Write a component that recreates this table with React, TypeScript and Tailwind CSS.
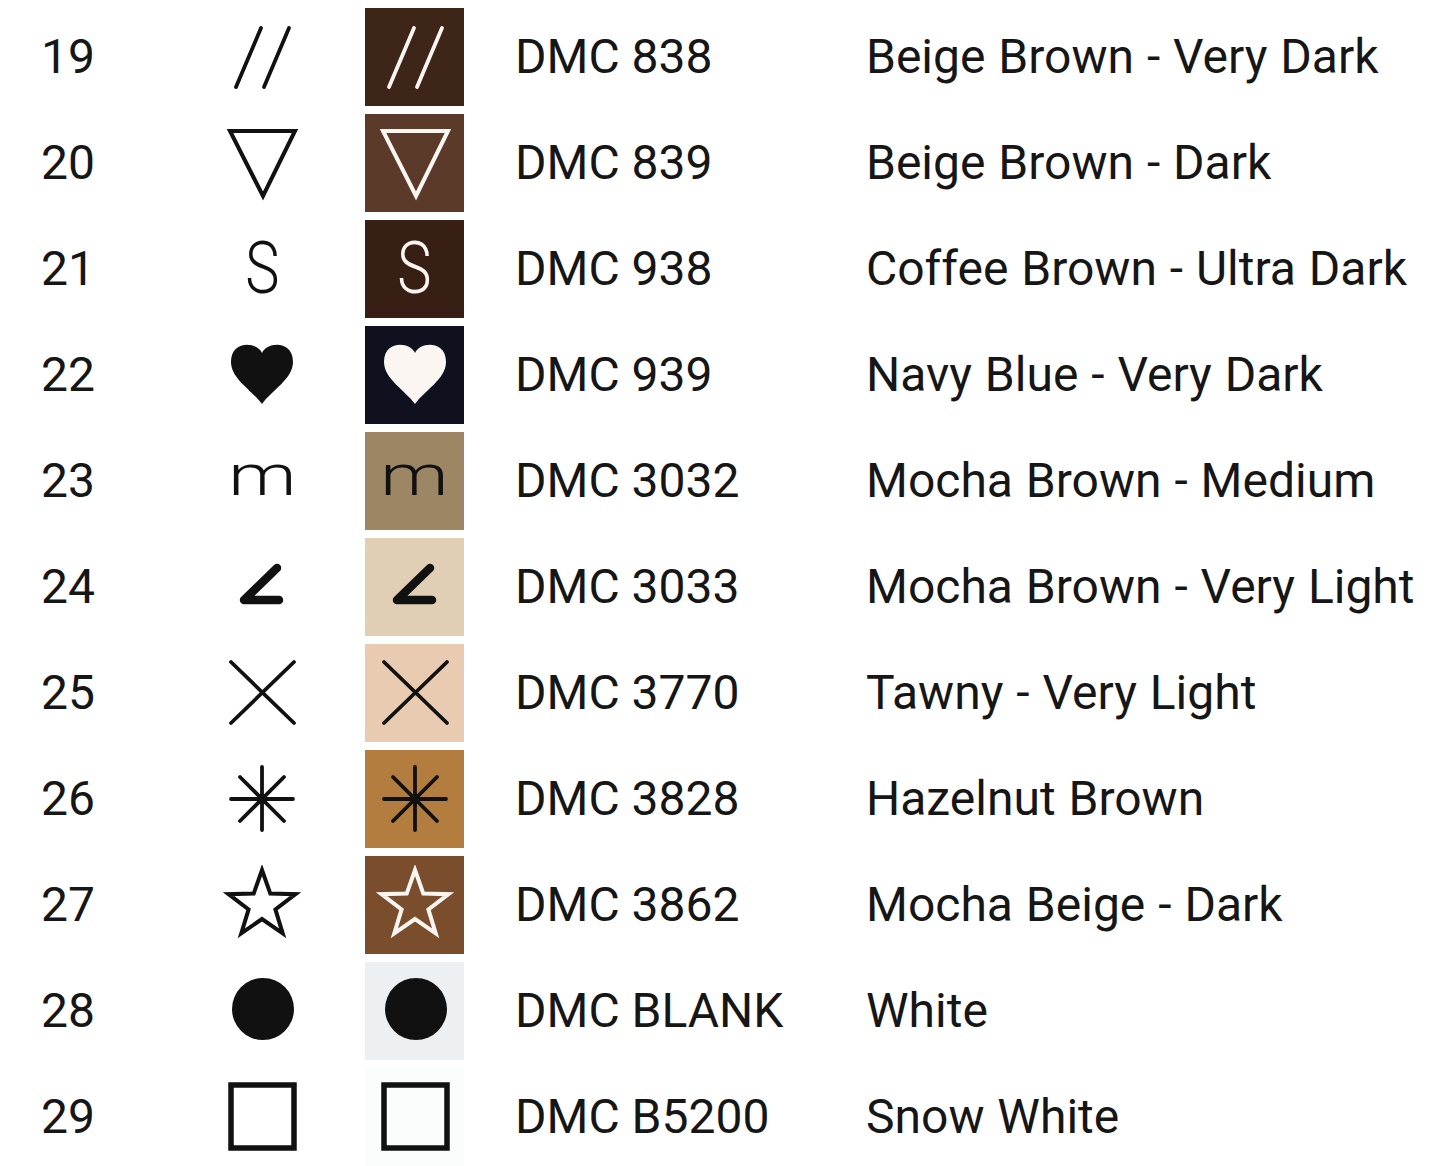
import React from "react"

type Sym = "slash" | "tri" | "s" | "heart" | "m" | "angle" | "x" | "ast" | "star" | "dot" | "square"

type Row = {
    n: string
    sym: Sym
    code: string
    name: string
    bg: string
    light: boolean
}

const rows: Row[] = [
    { n: "19", sym: "slash", code: "DMC 838", name: "Beige Brown - Very Dark", bg: "bg-[#3d2618]", light: true },
    { n: "20", sym: "tri", code: "DMC 839", name: "Beige Brown - Dark", bg: "bg-[#5b3a29]", light: true },
    { n: "21", sym: "s", code: "DMC 938", name: "Coffee Brown - Ultra Dark", bg: "bg-[#381f14]", light: true },
    { n: "22", sym: "heart", code: "DMC 939", name: "Navy Blue - Very Dark", bg: "bg-[#10111e]", light: true },
    { n: "23", sym: "m", code: "DMC 3032", name: "Mocha Brown - Medium", bg: "bg-[#9c8663]", light: false },
    { n: "24", sym: "angle", code: "DMC 3033", name: "Mocha Brown - Very Light", bg: "bg-[#e1cfb5]", light: false },
    { n: "25", sym: "x", code: "DMC 3770", name: "Tawny - Very Light", bg: "bg-[#e8cbb1]", light: false },
    { n: "26", sym: "ast", code: "DMC 3828", name: "Hazelnut Brown", bg: "bg-[#b27d3e]", light: false },
    { n: "27", sym: "star", code: "DMC 3862", name: "Mocha Beige - Dark", bg: "bg-[#7a4d2d]", light: true },
    { n: "28", sym: "dot", code: "DMC BLANK", name: "White", bg: "bg-[#edf0f2]", light: false },
    { n: "29", sym: "square", code: "DMC B5200", name: "Snow White", bg: "bg-[#fbfcfc]", light: false },
]

const Symbol = ({ kind, color }: { kind: Sym; color: string }) => {
    const line = { stroke: color, strokeWidth: 3.8, strokeLinecap: "round" as const, fill: "none" }

    // letter symbols are plain text
    if (kind === "s") {
        return (
            <div className="w-[80px] h-[80px] flex items-center justify-center">
                <span className="text-[72px] leading-none font-light scale-x-[0.8]" style={{ color }}>S</span>
            </div>
        )
    }
    if (kind === "m") {
        return (
            <div className="w-[80px] h-[80px] flex items-center justify-center">
                <span className="text-[57px] leading-none font-light scale-x-[1.35] -translate-y-[6px]" style={{ color }}>m</span>
            </div>
        )
    }

    return (
        <svg width="80" height="80" viewBox="-40 -40 80 80">
            {kind === "slash" && (
                <g {...line}>
                    <line x1="-1" y1="-29" x2="-26" y2="30" />
                    <line x1="27" y1="-29" x2="2" y2="30" />
                </g>
            )}
            {kind === "tri" && (
                <polygon points="-32,-32 33,-32 1,33" fill="none" stroke={color} strokeWidth="4" />
            )}
            {kind === "heart" && (
                <path d="M0 -22 C-4 -33 -31 -36 -31 -13 C-31 4 -10 15 0 29 C10 15 31 4 31 -13 C31 -36 4 -33 0 -22 Z" fill={color} />
            )}
            {kind === "angle" && (
                <path d="M15 -19 L-18 13 L17 13" fill="none" stroke={color} strokeWidth="8.5" strokeLinecap="round" strokeLinejoin="round" />
            )}
            {kind === "x" && (
                <g {...line}>
                    <line x1="-31" y1="-31" x2="32" y2="30" />
                    <line x1="32" y1="-31" x2="-31" y2="30" />
                </g>
            )}
            {kind === "ast" && (
                <g>
                    <g {...line} strokeWidth="3.8">
                        <line x1="-31" y1="0" x2="31" y2="0" />
                        <line x1="0" y1="-32" x2="0" y2="31" />
                        <line x1="-22" y1="-22" x2="22" y2="22" />
                        <line x1="22" y1="-22" x2="-22" y2="22" />
                    </g>
                    <circle cx="0" cy="0" r="5" fill={color} />
                </g>
            )}
            {kind === "star" && (
                <polygon
                    points="0,-35 8.3,-11.4 33.5,-10.8 13.4,4.4 20.7,28.3 0,14 -20.7,28.3 -13.4,4.4 -33.5,-10.8 -8.3,-11.4"
                    fill="none" stroke={color} strokeWidth="4" strokeLinejoin="miter" />
            )}
            {kind === "dot" && <circle cx="1" cy="-2" r="31" fill={color} />}
            {kind === "square" && (
                <rect x="-31" y="-32" width="63" height="63" fill="none" stroke={color} strokeWidth="5.5" />
            )}
        </svg>
    )
}

const App = () => {
    return (
        <div className="w-[1445px] h-[1166px] overflow-hidden bg-white text-[#161616]"
            style={{ fontFamily: "Roboto, 'Open Sans', sans-serif" }}>
            <div className="-mt-[102px] flex flex-col">
                {/* tail of the previous swatch */}
                <div className="flex items-center h-[106px]">
                    <div className="ml-[365px] w-[99px] h-[98px] bg-[#4a3326]" />
                </div>

                {rows.map(r => (
                    <div key={r.n} className="flex items-center h-[106px] text-[48px] leading-none">
                        <div className="w-[212px] pl-[41px]">{r.n}</div>
                        <div className="w-[100px] flex justify-center">
                            <Symbol kind={r.sym} color="#111111" />
                        </div>
                        <div className={`ml-[53px] w-[99px] h-[98px] flex items-center justify-center ${r.bg}`}>
                            <Symbol kind={r.sym} color={r.light ? "#fbf6f2" : "#111111"} />
                        </div>
                        <div className="ml-[51px] w-[351px] whitespace-nowrap">{r.code}</div>
                        <div className="whitespace-nowrap [word-spacing:1px]">{r.name}</div>
                    </div>
                ))}
            </div>
        </div>
    )
}

export default App
